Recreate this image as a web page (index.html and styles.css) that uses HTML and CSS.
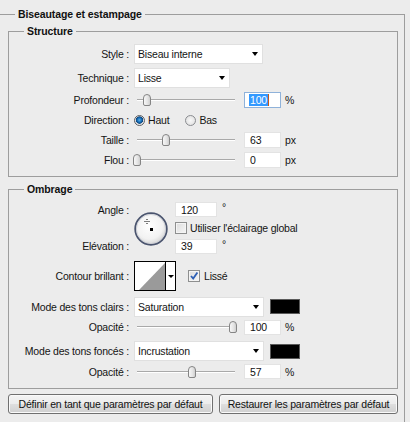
FILE: index.html
```html
<!DOCTYPE html>
<html lang="fr">
<head>
<meta charset="utf-8">
<title>Biseautage et estampage</title>
<link rel="stylesheet" href="styles.css">
</head>
<body>
<fieldset class="outer">
  <legend class="title">Biseautage et estampage</legend>

  <fieldset class="group structure">
    <legend class="title">Structure</legend>

    <div class="row r-style">
      <span class="lbl">Style :</span>
      <div class="select w-style"><span>Biseau interne</span><i class="arrow"></i></div>
    </div>
    <div class="row r-tech">
      <span class="lbl">Technique :</span>
      <div class="select w-tech"><span>Lisse</span><i class="arrow"></i></div>
    </div>
    <div class="row r-first">
      <span class="lbl">Profondeur :</span>
      <div class="slider"><span class="thumb" style="left:6px"></span></div>
      <div class="field focus"><span class="sel">100</span><span class="caret"></span></div>
      <span class="unit">%</span>
    </div>
    <div class="row">
      <span class="lbl">Direction :</span>
      <label class="radio on"><span class="dot"></span>Haut</label>
      <label class="radio bas"><span class="dot"></span>Bas</label>
    </div>
    <div class="row">
      <span class="lbl">Taille :</span>
      <div class="slider"><span class="thumb" style="left:25px"></span></div>
      <div class="field">63</div>
      <span class="unit">px</span>
    </div>
    <div class="row">
      <span class="lbl">Flou :</span>
      <div class="slider"><span class="thumb" style="left:-4px"></span></div>
      <div class="field">0</div>
      <span class="unit">px</span>
    </div>
  </fieldset>

  <fieldset class="group ombrage">
    <legend class="title">Ombrage</legend>

    <div class="angle-block">
      <div class="lblcol">
        <span class="lbl r1">Angle :</span>
        <span class="lbl r2"></span>
        <span class="lbl r3">Elévation :</span>
      </div>
      <svg class="dial" width="34" height="34" viewBox="0 0 34 34">
        <defs>
          <radialGradient id="dg" cx="45%" cy="40%" r="60%">
            <stop offset="0" stop-color="#ffffff"/>
            <stop offset="0.7" stop-color="#f2f2f2"/>
            <stop offset="1" stop-color="#d4d4d4"/>
          </radialGradient>
        </defs>
        <circle cx="17" cy="17" r="15.8" fill="url(#dg)" stroke="#4a546e" stroke-width="1.8"/>
        <circle cx="17" cy="17" r="14.6" fill="none" stroke="#c9ccd3" stroke-width="0.8"/>
        <g fill="#000">
          <rect x="12.5" y="7" width="1" height="1"/>
          <rect x="12.5" y="11" width="1" height="1"/>
          <rect x="10.5" y="9" width="1" height="1"/>
          <rect x="14.5" y="9" width="1" height="1"/>
          <rect x="12.5" y="9" width="1" height="1"/>
          <rect x="16" y="16" width="3" height="3"/>
        </g>
      </svg>
      <div class="fcol">
        <div class="frow r1"><div class="field sm">120</div><span class="unit deg">°</span></div>
        <label class="check r2"><span class="box"></span>Utiliser l'éclairage global</label>
        <div class="frow r3"><div class="field sm">39</div><span class="unit deg">°</span></div>
      </div>
    </div>

    <div class="row r-contour">
      <span class="lbl">Contour brillant :</span>
      <div class="contour">
        <svg class="curve" width="30" height="28" viewBox="0 0 30 28">
          <rect width="30" height="28" fill="#ffffff"/>
          <polygon points="4,28 30,1 30,28" fill="#9a9a9a"/>
        </svg>
        <span class="cdrop"><i class="arrow"></i></span>
      </div>
      <label class="check lisse"><span class="box on">
        <svg width="10" height="10" viewBox="0 0 10 10"><path d="M2 5 L4.2 7.6 L8.4 1.6" fill="none" stroke="#2d5fb5" stroke-width="1.8"/></svg>
      </span>Lissé</label>
    </div>

    <div class="row r-mode1">
      <span class="lbl">Mode des tons clairs :</span>
      <div class="select w-mode"><span>Saturation</span><i class="arrow"></i></div>
      <span class="swatch"></span>
    </div>
    <div class="row r-op1">
      <span class="lbl">Opacité :</span>
      <div class="slider"><span class="thumb" style="left:92px"></span></div>
      <div class="field sm">100</div>
      <span class="unit">%</span>
    </div>
    <div class="row r-mode2">
      <span class="lbl">Mode des tons foncés :</span>
      <div class="select w-mode"><span>Incrustation</span><i class="arrow"></i></div>
      <span class="swatch"></span>
    </div>
    <div class="row r-op2">
      <span class="lbl">Opacité :</span>
      <div class="slider"><span class="thumb" style="left:51px"></span></div>
      <div class="field sm">57</div>
      <span class="unit">%</span>
    </div>
  </fieldset>

  <div class="buttons">
    <button class="btn b1" type="button">Définir en tant que paramètres par défaut</button>
    <button class="btn b2" type="button">Restaurer les paramètres par défaut</button>
  </div>
</fieldset>
</body>
</html>
```

FILE: styles.css
```css
html, body {
  margin: 0;
  padding: 0;
  overflow: hidden;
}
body {
  width: 410px;
  height: 422px;
  background: #ececec;
  font-family: "Liberation Sans", Arial, sans-serif;
  font-size: 10.5px;
  letter-spacing: -0.2px;
  color: #141414;
}

/* group boxes */
.outer {
  margin: 8px 0 0 -2px;
  width: 407px;
  box-sizing: border-box;
  border: 1px solid #9d9d9d;
  border-bottom-width: 0;
  padding: 5px 6px 8px 9px;
  min-width: 0;
}
legend.title {
  font-weight: bold;
  font-size: 10.5px;
  line-height: 12px;
  padding: 0 3px;
  margin-left: 7px;
  letter-spacing: -0.1px;
  color: #111;
}
.group {
  margin: 0;
  padding: 0 0 6px 0;
  border: 1px solid #9d9d9d;
  min-width: 0;
}
.group > legend.title {
  margin-left: 15px;
}
.ombrage {
  margin-top: 6px;
}

/* rows */
.row {
  display: flex;
  align-items: center;
  height: 20px;
}
.r-style { margin-top: 7px; }
.r-tech { margin-top: 4px; }
.r-first { margin-top: 2px; }
.lbl {
  flex: none;
  width: 120px;
  margin-right: 5px;
  text-align: right;
  white-space: nowrap;
}

/* dropdowns */
.select {
  box-sizing: border-box;
  height: 20px;
  background: #fff;
  border: 1px solid #e0e0e0;
  display: flex;
  align-items: center;
  justify-content: space-between;
  padding: 0 4px 0 3px;
}
.w-style { width: 129px; }
.w-tech { width: 96px; }
.w-mode { width: 130px; }
.arrow {
  display: block;
  width: 0;
  height: 0;
  border-left: 3.5px solid transparent;
  border-right: 3.5px solid transparent;
  border-top: 4px solid #000;
}

/* sliders */
.slider {
  position: relative;
  flex: none;
  width: 98px;
  height: 20px;
  margin-left: 3px;
}
.slider::before {
  content: "";
  display: block;
  margin-top: 9px;
  height: 0;
  border-top: 1px solid #a9a9a9;
  border-bottom: 1px solid #ffffff;
}
.thumb {
  position: absolute;
  top: 4px;
  width: 8px;
  height: 12px;
  box-sizing: border-box;
  border: 1px solid #858585;
  border-radius: 4px 4px 2px 2px;
  background: linear-gradient(90deg, #f7f7f7, #e4e4e4 60%, #cfcfcf);
}

/* text fields */
.field {
  flex: none;
  box-sizing: border-box;
  width: 37px;
  height: 16px;
  margin-left: 9px;
  background: #fff;
  border: 1px solid #e3e3e3;
  display: flex;
  align-items: center;
  padding-left: 5px;
  color: #111;
}
.field.sm { height: 15px; }
.field.focus {
  border-color: #8fb2da;
}
.sel {
  background: #3399ff;
  color: #fff;
  line-height: 12px;
  padding: 0 1px;
  margin-left: -1px;
}
.caret {
  width: 1px;
  height: 12px;
  background: #c4581a;
}
.unit {
  margin-left: 4px;
}
.unit.deg {
  margin-left: 5px;
  align-self: flex-start;
  margin-top: 1px;
}

/* radio */
.radio {
  display: flex;
  align-items: center;
}
.radio.bas { margin-left: 16px; }
.dot {
  box-sizing: border-box;
  width: 11px;
  height: 11px;
  border-radius: 50%;
  border: 1px solid #8a8c90;
  background: radial-gradient(circle at 50% 50%, #f8f8f8 0, #e2e2e2 5px);
  margin-right: 3px;
}
.radio.on .dot {
  border-color: #5b5e63;
  background: radial-gradient(circle at 50% 45%, #5bb2ee 0, #1a72bb 2px, #0b467f 3.4px, #d9dadb 3.9px, #f3f3f3 5px);
}

/* angle block */
.angle-block {
  display: flex;
  margin-top: 5px;
}
.lblcol, .fcol {
  display: flex;
  flex-direction: column;
}
.lblcol .lbl, .fcol > * {
  display: flex;
  align-items: center;
}
.lblcol .lbl { justify-content: flex-end; }
.r1 { height: 19px; }
.r2 { height: 18px; }
.r3 { height: 18px; }
.dial {
  flex: none;
  display: block;
  margin-top: 12px;
}
.fcol {
  margin-left: 7px;
}
.fcol .field { margin-left: 0; width: 42px; }

/* checkbox */
.check {
  display: flex;
  align-items: center;
  white-space: nowrap;
}
.box {
  box-sizing: border-box;
  width: 12px;
  height: 12px;
  border: 1px solid #8e8f8f;
  background: linear-gradient(135deg, #dcdcdc, #f6f6f6);
  box-shadow: inset 0 0 0 1px #f4f4f4;
  margin-right: 3px;
  display: flex;
  align-items: center;
  justify-content: center;
}
.box svg { display: block; }

/* contour */
.r-contour {
  margin-top: 6px;
  height: 30px;
}
.contour {
  flex: none;
  box-sizing: border-box;
  width: 42px;
  height: 30px;
  border: 1px solid #000;
  display: flex;
  background: #fff;
}
.curve { display: block; }
.cdrop {
  flex: 1;
  border-left: 1px solid #000;
  display: flex;
  align-items: center;
  justify-content: center;
}
.cdrop .arrow {
  border-left-width: 3px;
  border-right-width: 3px;
  border-top-width: 3px;
}
.lisse { margin-left: 12px; }
.lisse .box { margin-right: 4px; }

/* modes */
.r-mode1 { margin-top: 5px; height: 21px; }
.r-op1 { height: 20px; }
.r-mode2 { margin-top: 4px; height: 20px; }
.r-op2 { height: 21px; }
.swatch {
  flex: none;
  box-sizing: border-box;
  width: 30px;
  height: 15px;
  margin-left: 6px;
  background: #000;
  border: 1px solid #5a5a5a;
}

/* buttons */
.buttons {
  display: flex;
  gap: 6px;
  margin-top: 5px;
}
.btn {
  box-sizing: border-box;
  height: 20px;
  border: 1px solid #707070;
  border-radius: 3px;
  background: linear-gradient(#f4f4f4 0%, #ececec 48%, #dedede 52%, #d0d0d0 100%);
  box-shadow: inset 0 0 0 1px #fafafa;
  font-family: "Liberation Sans", Arial, sans-serif;
  font-size: 10.5px;
  letter-spacing: -0.2px;
  color: #111;
  padding: 0;
  text-align: center;
}
.b1 { width: 206px; }
.b2 { width: 180px; }
```
